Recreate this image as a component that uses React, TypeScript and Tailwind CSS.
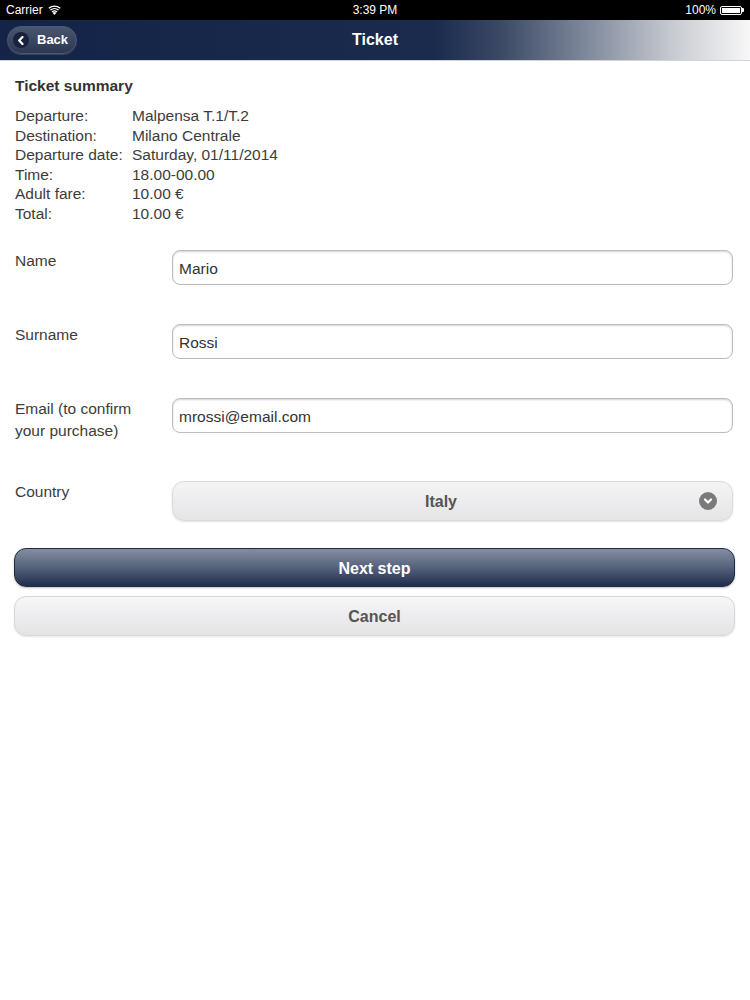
import React from "react";

const font = { fontFamily: "'Liberation Sans', Arial, sans-serif" };

const summary: [string, string][] = [
  ["Departure:", "Malpensa T.1/T.2"],
  ["Destination:", "Milano Centrale"],
  ["Departure date:", "Saturday, 01/11/2014"],
  ["Time:", "18.00-00.00"],
  ["Adult fare:", "10.00 €"],
  ["Total:", "10.00 €"],
];

const StatusBar = () => (
  <div className="relative flex h-[20px] items-center justify-between bg-black px-[6px] text-[12px] text-white">
    <div className="flex items-center gap-[5px]">
      <span>Carrier</span>
      <svg width="13" height="10" viewBox="0 0 13 10" fill="white">
        <path d="M6.5 10 L4.6 7.7 A3 3 0 0 1 8.4 7.7 Z" />
        <path d="M3.6 6.5 A4.4 4.4 0 0 1 9.4 6.5 L8.6 7.4 A3.3 3.3 0 0 0 4.4 7.4 Z" />
        <path d="M2 4.6 A6.8 6.8 0 0 1 11 4.6 L10.1 5.6 A5.5 5.5 0 0 0 2.9 5.6 Z" />
        <path d="M0.4 2.8 A9 9 0 0 1 12.6 2.8 L11.7 3.8 A7.8 7.8 0 0 0 1.3 3.8 Z" />
      </svg>
    </div>
    <span className="absolute left-1/2 -translate-x-1/2">3:39 PM</span>
    <div className="flex items-center gap-[4px]">
      <span>100%</span>
      <div className="flex items-center">
        <div className="h-[9px] w-[22px] rounded-[2px] border border-white p-[1px]">
          <div className="h-full w-full bg-white" />
        </div>
        <div className="h-[4px] w-[2px] rounded-r-[1px] bg-white" />
      </div>
    </div>
  </div>
);

const NavBar = () => (
  <div className="relative flex h-[41px] items-center border-b border-[#d0d4da] bg-[linear-gradient(to_right,#142448_0%,#1a2b4d_58%,#3c4a66_67%,#8a93a4_80%,#c9ccd2_90%,#f7f7f8_100%)]">
    <button className="ml-[7px] flex h-[28px] w-[70px] items-center gap-[8px] rounded-full border border-[#4c5874] bg-[linear-gradient(to_bottom,#4a566f,#2c3852)] pl-[5px] shadow-[0_1px_0_rgba(255,255,255,0.15)]">
      <span className="flex h-[16px] w-[16px] items-center justify-center rounded-full bg-[#18223a]">
        <svg width="8" height="9" viewBox="0 0 8 9">
          <path d="M5.5 1 L2.2 4.5 L5.5 8" stroke="white" strokeWidth="2.2" fill="none" strokeLinecap="round" strokeLinejoin="round" />
        </svg>
      </span>
      <span className="text-[13px] font-bold text-white">Back</span>
    </button>
    <span className="absolute left-1/2 -translate-x-1/2 text-[16px] font-bold text-white">Ticket</span>
  </div>
);

const Field = ({ label, value }: { label: React.ReactNode; value: string }) => (
  <div className="flex items-start">
    <div className="w-[157px] text-[15.5px] leading-[22px] text-[#3c3c3c]">{label}</div>
    <div className="flex h-[35px] w-[561px] items-center rounded-[8px] border border-[#bcbcbc] bg-white pl-[6px] pt-[2px] text-[15.5px] text-[#333] shadow-[inset_0_1px_2px_rgba(0,0,0,0.18)]">
      {value}
    </div>
  </div>
);

export default function App() {
  return (
    <div className="min-h-[1000px] w-[750px] bg-white" style={font}>
      <StatusBar />
      <NavBar />

      <div className="pl-[15px] pr-[15px] pt-[15px]">
        <h2 className="text-[15.5px] font-bold leading-[20px] text-[#333]">Ticket summary</h2>
        <div className="mt-[10px] grid grid-cols-[117px_1fr] text-[15.5px] leading-[19.5px] text-[#3c3c3c]">
          {summary.map(([k, v]) => (
            <React.Fragment key={k}>
              <span>{k}</span>
              <span>{v}</span>
            </React.Fragment>
          ))}
        </div>

        <div className="mt-[27px] flex flex-col gap-[39px]">
          <Field label="Name" value="Mario" />
          <Field label="Surname" value="Rossi" />
          <Field
            label={
              <>
                Email (to confirm
                <br />
                your purchase)
              </>
            }
            value="mrossi@email.com"
          />
          <div className="flex items-start">
            <div className="w-[157px] text-[15.5px] leading-[22px] text-[#3c3c3c]">Country</div>
            <div className="flex h-[40px] w-[561px] items-center rounded-[12px] border border-[#dadada] bg-[linear-gradient(to_bottom,#f4f4f5,#e5e5e7)] pr-[15px] shadow-[0_1px_2px_rgba(0,0,0,0.12)]">
              <span className="flex-1 pl-[10px] pt-[2px] text-center text-[16px] font-bold text-[#555]">Italy</span>
              <span className="flex h-[18px] w-[18px] items-center justify-center rounded-full bg-[#7a7a7a]">
                <svg width="10" height="8" viewBox="0 0 10 8">
                  <path d="M2 2.5 L5 5.5 L8 2.5" stroke="white" strokeWidth="2.2" fill="none" strokeLinecap="round" strokeLinejoin="round" />
                </svg>
              </span>
            </div>
          </div>
        </div>
      </div>

      <div className="ml-[14px] mr-[15px] mt-[27px] flex flex-col gap-[9px]">
        <button className="flex h-[39px] items-center justify-center rounded-[12px] border border-[#1f2c46] bg-[linear-gradient(to_bottom,#858da0,#56627c_50%,#1e2d4c)] pt-[2px] text-[16px] font-bold text-white shadow-[0_1px_2px_rgba(0,0,0,0.25)]">
          Next step
        </button>
        <button className="flex h-[40px] items-center justify-center rounded-[12px] border border-[#d6d6d6] bg-[linear-gradient(to_bottom,#f6f5f7,#e4e4e6)] pt-[2px] text-[16px] font-bold text-[#555] shadow-[0_1px_2px_rgba(0,0,0,0.1)]">
          Cancel
        </button>
      </div>
    </div>
  );
}
